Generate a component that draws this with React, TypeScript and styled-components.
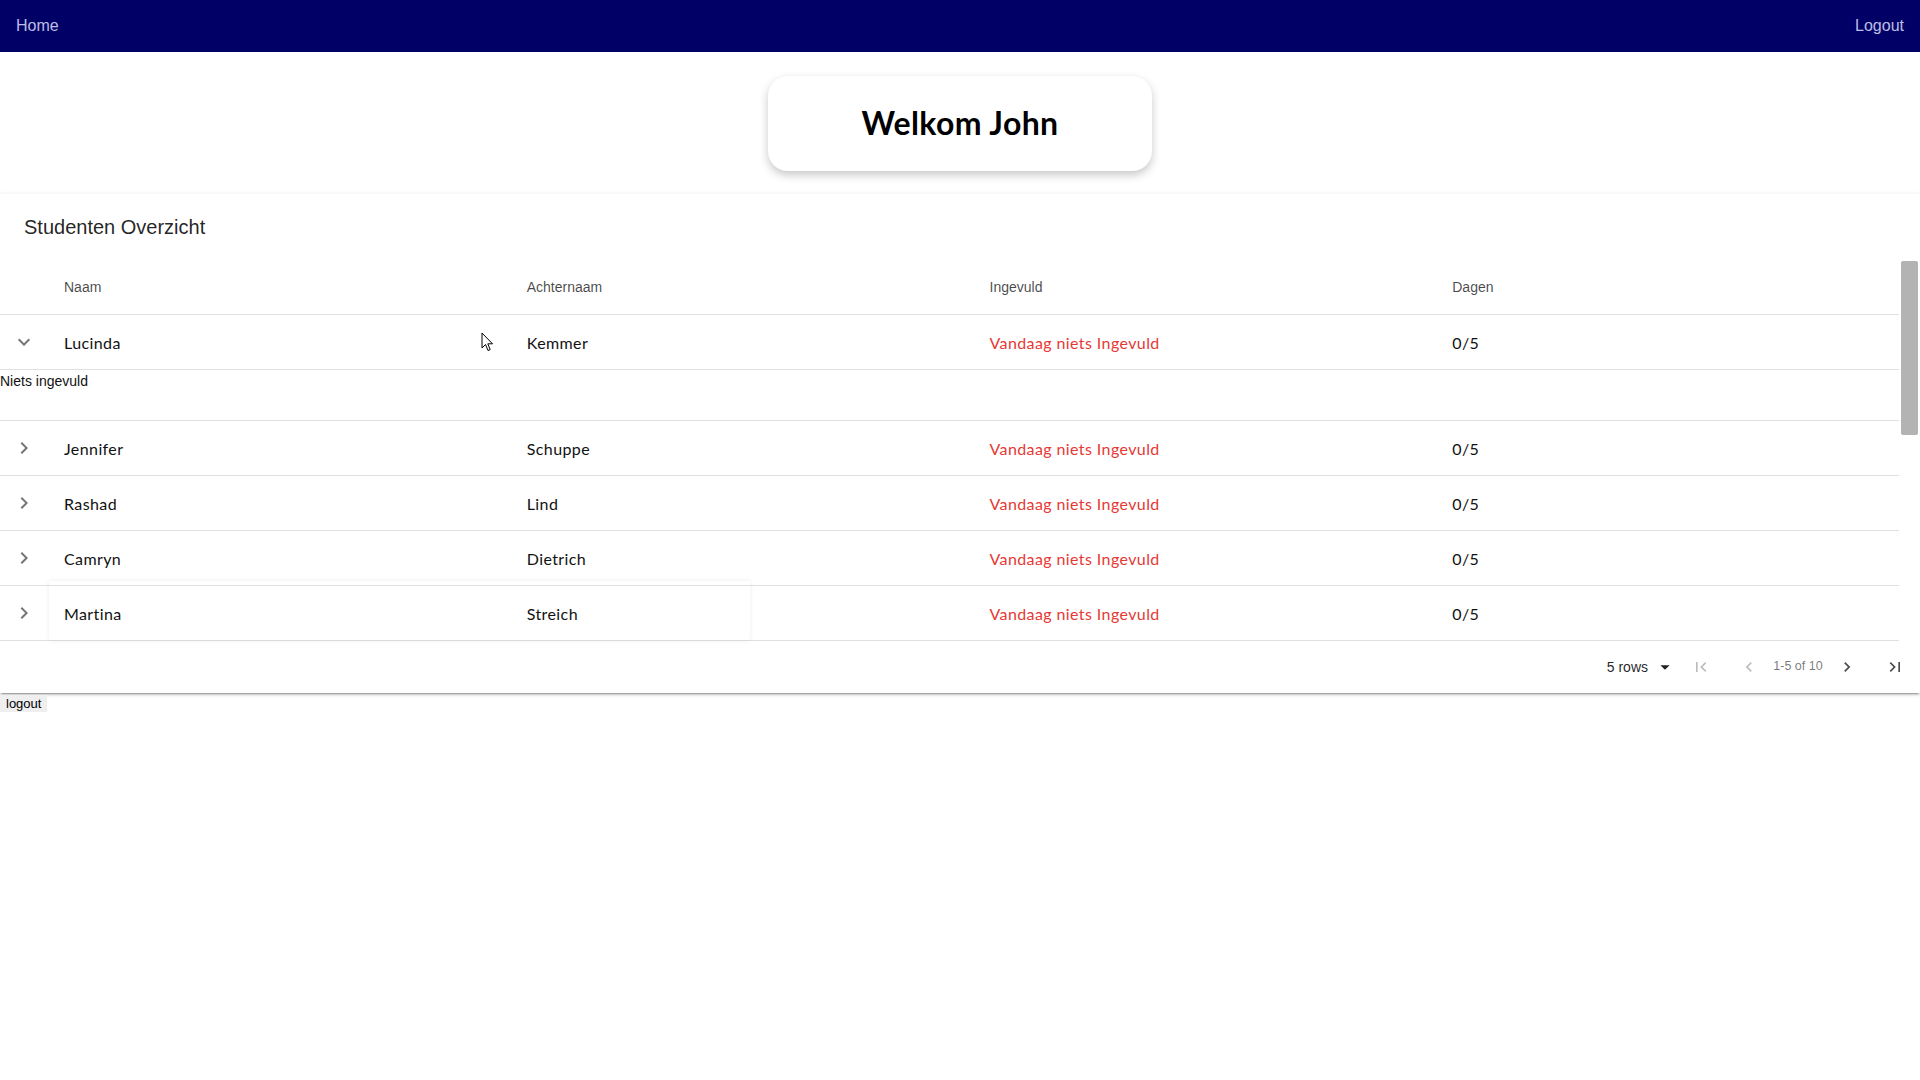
import React from "react";
import styled, { createGlobalStyle } from "styled-components";

const GlobalStyle = createGlobalStyle`
  html, body { margin: 0; padding: 0; background: #fff; }
  body { font-family: "Liberation Sans", Arial, sans-serif; }
  * { box-sizing: border-box; }
`;

const NavBar = styled.nav`
  height: 52px;
  background: #000066;
  display: flex;
  align-items: center;
  justify-content: space-between;
  padding: 0 16px;
`;

const NavLink = styled.a`
  color: rgba(225, 225, 255, 0.85);
  font-family: "Liberation Sans", Arial, sans-serif;
  font-size: 16px;
  text-decoration: none;
`;

const Hero = styled.div`
  display: flex;
  justify-content: center;
  padding: 24px 0 23px;
`;

const WelcomeCard = styled.div`
  width: 384px;
  height: 95px;
  border-radius: 20px;
  background: #fff;
  box-shadow: 0 4px 10px rgba(0, 0, 0, 0.22);
  display: flex;
  align-items: center;
  justify-content: center;
  padding-bottom: 3px;
`;

const WelcomeTitle = styled.h1`
  margin: 0;
  font-family: Lato, "Open Sans", sans-serif;
  font-weight: 700;
  font-size: 32px;
  letter-spacing: 0.4px;
  color: #000;
`;

const Paper = styled.section`
  background: #fff;
  box-shadow: 0px 3px 1px -2px rgba(0, 0, 0, 0.2), 0px 2px 2px 0px rgba(0, 0, 0, 0.14),
    0px 1px 5px 0px rgba(0, 0, 0, 0.12);
`;

const Toolbar = styled.div`
  height: 65px;
  display: flex;
  align-items: center;
  padding-left: 24px;
  padding-top: 2px;
`;

const ToolbarTitle = styled.h6`
  margin: 0;
  font-family: "Liberation Sans", Arial, sans-serif;
  font-weight: 400;
  font-size: 20px;
  color: rgba(0, 0, 0, 0.87);
`;

const ScrollArea = styled.div`
  display: flex;
`;

const Table = styled.div`
  width: 1899px;
  display: flex;
  flex-direction: column;
`;

const Row = styled.div<{ $height: number }>`
  position: relative;
  display: grid;
  grid-template-columns: 48px repeat(4, 1fr);
  align-items: center;
  height: ${(p) => p.$height}px;
  border-bottom: 1px solid #e0e0e0;
`;

const HeadCell = styled.div`
  padding-left: 16px;
  font-family: "Liberation Sans", Arial, sans-serif;
  font-size: 14px;
  color: rgba(0, 0, 0, 0.72);
`;

const Cell = styled.div<{ $danger?: boolean }>`
  padding-left: 16px;
  font-family: Lato, "Open Sans", sans-serif;
  font-size: 16px;
  letter-spacing: 0.4px;
  color: ${(p) => (p.$danger ? "#e53935" : "#111")};
`;

const ExpandCell = styled.div`
  display: flex;
  justify-content: center;
  color: rgba(0, 0, 0, 0.54);
`;

const DetailRow = styled.div`
  height: 51px;
  border-bottom: 1px solid #e0e0e0;
  font-family: "Liberation Sans", Arial, sans-serif;
  font-size: 14px;
  color: #111;
  padding-top: 3px;
`;

const DragGhost = styled.div`
  position: absolute;
  left: 49px;
  top: -5px;
  width: 701px;
  bottom: 0;
  box-shadow: 0 0 5px rgba(0, 0, 0, 0.08);
  pointer-events: none;
`;

const Cursor = styled.svg`
  position: absolute;
  left: 481px;
  top: 17px;
`;

const ScrollTrack = styled.div`
  width: 21px;
  padding: 2px 2px 0 2px;
`;

const ScrollThumb = styled.div`
  height: 174px;
  background: #b3b3b3;
  border-radius: 2px;
`;

const Footer = styled.div`
  height: 52px;
  display: flex;
  align-items: center;
  justify-content: flex-end;
  padding-right: 1px;
  font-family: "Liberation Sans", Arial, sans-serif;
`;

const RowsSelect = styled.div`
  display: flex;
  align-items: center;
  gap: 6px;
  font-size: 14px;
  color: rgba(0, 0, 0, 0.87);
  margin-right: 1px;
`;

const PageButton = styled.div<{ $disabled?: boolean }>`
  width: 48px;
  height: 48px;
  display: flex;
  align-items: center;
  justify-content: center;
  color: ${(p) => (p.$disabled ? "rgba(0,0,0,0.26)" : "rgba(0,0,0,0.7)")};
`;

const PageInfo = styled.span`
  width: 50px;
  text-align: center;
  white-space: nowrap;
  font-size: 12.5px;
  color: rgba(0, 0, 0, 0.55);
  padding-bottom: 2px;
`;

const LogoutButton = styled.button`
  display: block;
  margin-top: 2px;
  border: none;
  background: #efefef;
  font-family: "Liberation Sans", Arial, sans-serif;
  font-size: 13px;
  color: #000;
  padding: 1px 6px;
  line-height: 15px;
`;

const Icon = ({ d, size = 24 }: { d: string; size?: number }) => (
  <svg width={size} height={size} viewBox="0 0 24 24" fill="currentColor">
    <path d={d} />
  </svg>
);

const CHEVRON_RIGHT = "M10 6L8.59 7.41 13.17 12l-4.58 4.59L10 18l6-6z";
const EXPAND_MORE = "M16.59 8.59L12 13.17 7.41 8.59 6 10l6 6 6-6z";
const FIRST_PAGE = "M18.41 16.59L13.82 12l4.59-4.59L17 6l-6 6 6 6zM6 6h2v12H6z";
const LAST_PAGE = "M5.59 7.41L10.18 12l-4.59 4.59L7 18l6-6-6-6zM16 6h2v12h-2z";
const CHEVRON_LEFT = "M15.41 7.41L14 6l-6 6 6 6 1.41-1.41L10.83 12z";
const ARROW_DROP = "M7 10l5 5 5-5z";

const students = [
  { first: "Lucinda", last: "Kemmer", open: true },
  { first: "Jennifer", last: "Schuppe" },
  { first: "Rashad", last: "Lind" },
  { first: "Camryn", last: "Dietrich" },
  { first: "Martina", last: "Streich", ghost: true },
];

export default function App() {
  return (
    <>
      <GlobalStyle />
      <NavBar>
        <NavLink>Home</NavLink>
        <NavLink>Logout</NavLink>
      </NavBar>
      <Hero>
        <WelcomeCard>
          <WelcomeTitle>Welkom John</WelcomeTitle>
        </WelcomeCard>
      </Hero>
      <Paper>
        <Toolbar>
          <ToolbarTitle>Studenten Overzicht</ToolbarTitle>
        </Toolbar>
        <ScrollArea>
          <Table>
            <Row $height={56}>
              <span />
              <HeadCell>Naam</HeadCell>
              <HeadCell>Achternaam</HeadCell>
              <HeadCell>Ingevuld</HeadCell>
              <HeadCell>Dagen</HeadCell>
            </Row>
            {students.map((s) => (
              <React.Fragment key={s.first}>
                <Row $height={55}>
                  <ExpandCell>
                    <Icon d={s.open ? EXPAND_MORE : CHEVRON_RIGHT} />
                  </ExpandCell>
                  <Cell>{s.first}</Cell>
                  <Cell>{s.last}</Cell>
                  <Cell $danger>Vandaag niets Ingevuld</Cell>
                  <Cell>0/5</Cell>
                  {s.ghost && <DragGhost />}
                  {s.open && (
                    <Cursor width="13" height="20" viewBox="0 0 13 20">
                      <path
                        d="M1 1 L1 16 L4.5 12.5 L7 18.5 L9.2 17.6 L6.8 11.8 L11.5 11.8 Z"
                        fill="#fff"
                        stroke="#000"
                        strokeWidth="1"
                        strokeLinejoin="round"
                      />
                    </Cursor>
                  )}
                </Row>
                {s.open && <DetailRow>Niets ingevuld</DetailRow>}
              </React.Fragment>
            ))}
          </Table>
          <ScrollTrack>
            <ScrollThumb />
          </ScrollTrack>
        </ScrollArea>
        <Footer>
          <RowsSelect>
            <span>5 rows</span>
            <Icon d={ARROW_DROP} size={22} />
          </RowsSelect>
          <PageButton $disabled>
            <Icon d={FIRST_PAGE} size={20} />
          </PageButton>
          <PageButton $disabled>
            <Icon d={CHEVRON_LEFT} size={20} />
          </PageButton>
          <PageInfo>1-5 of 10</PageInfo>
          <PageButton>
            <Icon d={CHEVRON_RIGHT} size={20} />
          </PageButton>
          <PageButton>
            <Icon d={LAST_PAGE} size={20} />
          </PageButton>
        </Footer>
      </Paper>
      <LogoutButton>logout</LogoutButton>
    </>
  );
}
